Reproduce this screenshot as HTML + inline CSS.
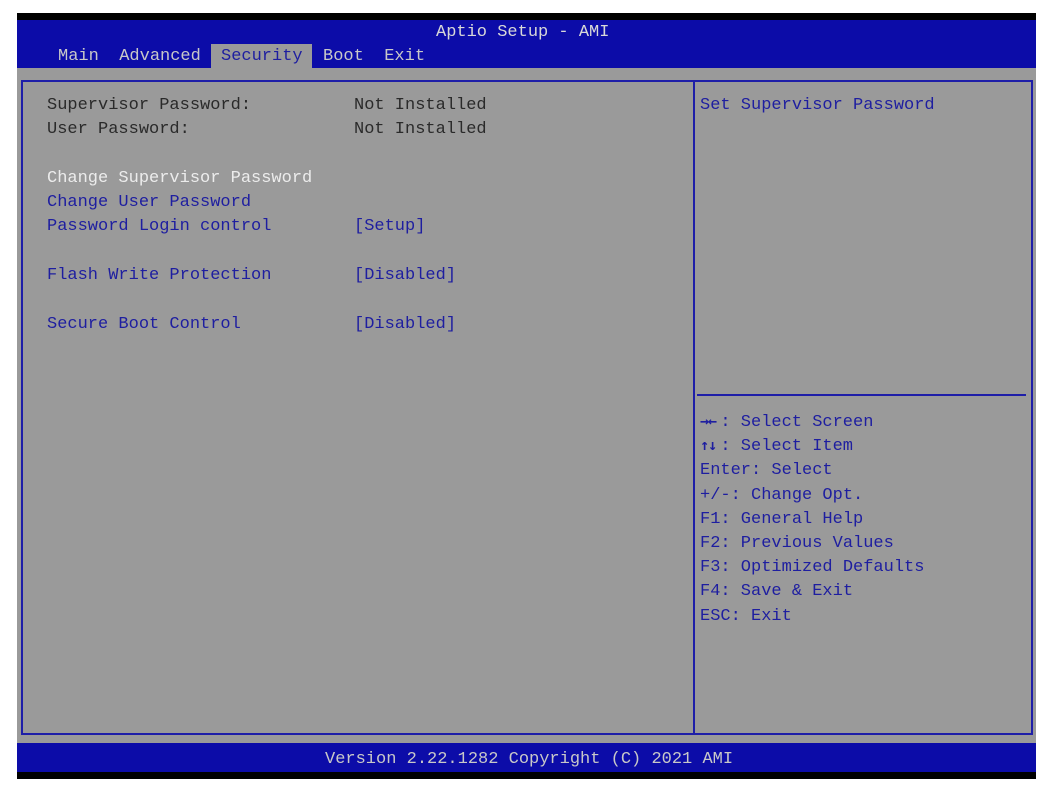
<!DOCTYPE html>
<html><head><style>
body{margin:0;width:1058px;height:787px;background:#fff;position:relative;overflow:hidden;font-family:"Liberation Mono",monospace;font-size:17px;}
div{position:absolute;}
.t{white-space:pre;line-height:20px;}
.b{color:#1e1ea0}
.d{color:#2a2a2a}
.w{color:#ececec}
.ar{display:inline-block;width:20.4px;line-height:0;font-family:"DejaVu Sans Mono",monospace;font-weight:bold;font-size:15px;letter-spacing:-1px}
</style></head><body>
<div style="left:17px;top:13px;width:1019px;height:766px;background:#000"></div>
<div style="left:17px;top:20px;width:1019px;height:48px;background:#0c0ca8"></div>
<div style="left:17px;top:68px;width:1019px;height:675px;background:#9a9a9a"></div>
<div style="left:17px;top:743px;width:1019px;height:29px;background:#0c0ca8"></div>
<div style="left:211px;top:44px;width:101px;height:24px;background:#9a9a9a"></div>
<div class="t" style="left:436px;top:23px;color:#d8d8d8">Aptio Setup - AMI</div>
<div class="t" style="left:58px;top:47px;color:#c8c8c8">Main  Advanced</div>
<div class="t b" style="left:221px;top:47px">Security</div>
<div class="t" style="left:323px;top:47px;color:#c8c8c8">Boot  Exit</div>
<div style="left:21px;top:80px;width:1008px;height:651px;border:2px solid #1e1ea8"></div>
<div style="left:693px;top:80px;width:2px;height:653px;background:#1e1ea8"></div>
<div style="left:697px;top:394px;width:329px;height:2px;background:#1e1ea8"></div>
<div class="t d" style="left:47px;top:96px">Supervisor Password:</div>
<div class="t d" style="left:354px;top:96px">Not Installed</div>
<div class="t d" style="left:47px;top:120px">User Password:</div>
<div class="t d" style="left:354px;top:120px">Not Installed</div>
<div class="t w" style="left:47px;top:169px">Change Supervisor Password</div>
<div class="t b" style="left:47px;top:193px">Change User Password</div>
<div class="t b" style="left:47px;top:217px">Password Login control</div>
<div class="t b" style="left:354px;top:217px">[Setup]</div>
<div class="t b" style="left:47px;top:266px">Flash Write Protection</div>
<div class="t b" style="left:354px;top:266px">[Disabled]</div>
<div class="t b" style="left:47px;top:315px">Secure Boot Control</div>
<div class="t b" style="left:354px;top:315px">[Disabled]</div>
<div class="t b" style="left:700px;top:96px">Set Supervisor Password</div>
<div class="t b" style="left:700px;top:411px;line-height:24.2px"><span class="ar">→←</span>: Select Screen
<span class="ar">↑↓</span>: Select Item
Enter: Select
+/-: Change Opt.
F1: General Help
F2: Previous Values
F3: Optimized Defaults
F4: Save &amp; Exit
ESC: Exit</div>
<div class="t" style="left:325px;top:750px;color:#c8c8c8">Version 2.22.1282 Copyright (C) 2021 AMI</div>
</body></html>
